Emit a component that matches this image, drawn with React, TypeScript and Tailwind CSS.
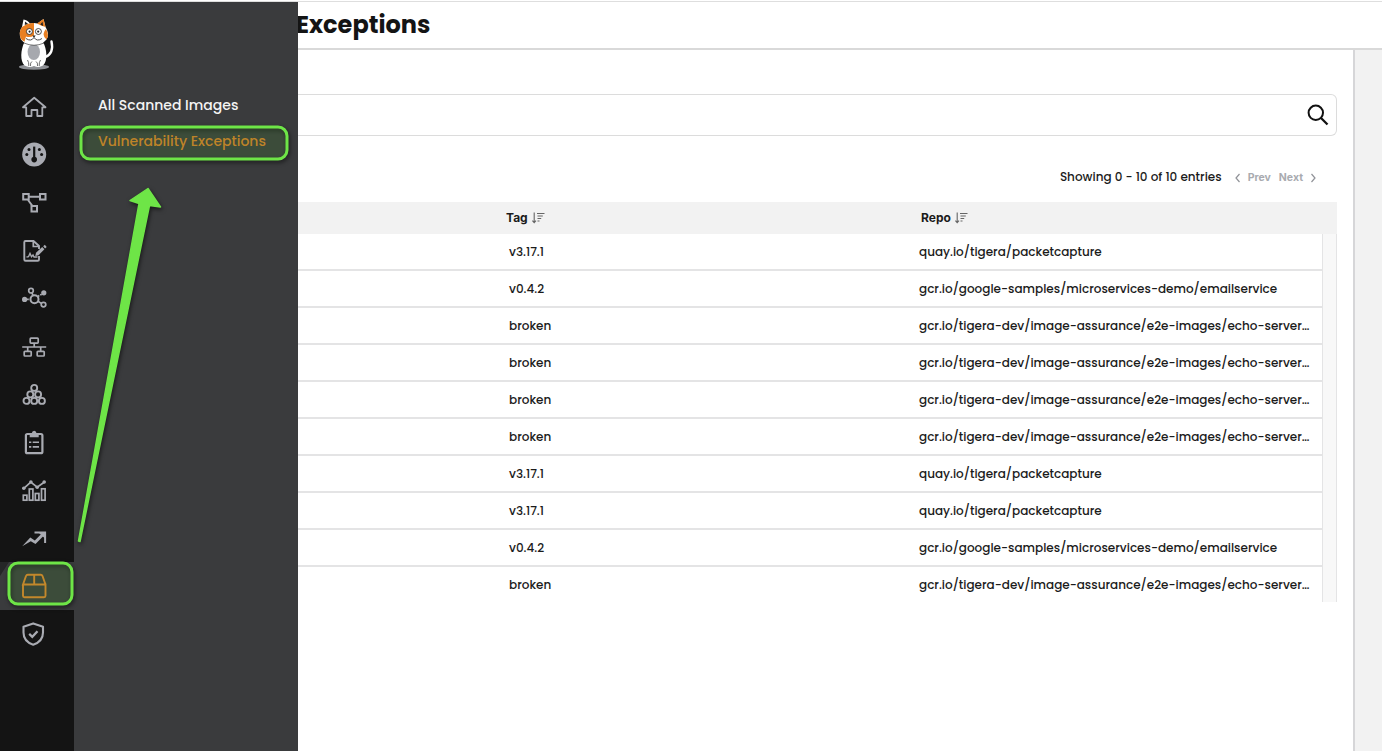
import type { ReactNode } from "react";

const iconProps = { width: 26, height: 26, viewBox: "0 0 26 26", fill: "none", stroke: "currentColor", strokeWidth: 1.7 } as const;

function CatLogo() {
  return (
    <svg width="38" height="54" viewBox="0 0 38 54">
      <ellipse cx="16" cy="50" rx="15" ry="2.7" fill="#8d8f94" />
      <path d="M27.5 40 C34 37 35 31 33.5 24.5" fill="none" stroke="#fff" strokeWidth="2.4" strokeLinecap="round" />
      <path d="M6.5 25C2.5 33 2 44 6.5 48.5Q11 51 16 49Q21 51 25 48.5C30 44 29 32 25 25Z" fill="#fff" />
      <ellipse cx="15.8" cy="35" rx="6.2" ry="8" fill="#a6a8ae" />
      <path d="M9.5 43Q11 45 10.8 49M12.5 49Q12 45.5 14 44.5M18 44.5Q20 45.5 19.5 49M22.5 43Q21 45 21.2 49" fill="none" stroke="#333" strokeWidth="0.7" />
      <path d="M4 10L5.5 2.5Q9.5 3 12 6.5Q16 5.5 19.5 6.5L25.5 2L27.5 10Q32 17 28.5 22.5Q24 28 16 28Q7 28 3 22.5Q0 16 4 10Z" fill="#fff" />
      <path d="M4 10L9 7Q14 6 16 6.1V18.5Q12 21 8 19.5L6.5 24.8Q3.5 23.5 2.3 20.5Q0.8 14 4 10Z" fill="#e87f22" />
      <path d="M19 6.5L25.5 2L27.5 10L23 8.5Z" fill="#e87f22" />
      <path d="M28 12Q31.5 18 28.5 22.5Q25.5 20 25.5 17Q26 14 28 12Z" fill="#e87f22" />
      <path d="M6.8 8L7 4.5L10 6.7ZM22.3 7.5L24.5 4.8L25.2 9Z" fill="#222" />
      <g fill="#fff" stroke="#222" strokeWidth="0.8">
        <circle cx="11.4" cy="14.5" r="3" />
        <circle cx="20.4" cy="14.5" r="3" />
      </g>
      <g fill="#222">
        <circle cx="11.6" cy="14.6" r="1.1" />
        <circle cx="20.2" cy="14.6" r="1.1" />
        <path d="M14.3 18.5H17.7L16 20.8Z" />
      </g>
      <path d="M16 20.5Q13 25 8 21.5M16 20.5Q19 25 24 21.5" fill="none" stroke="#222" strokeWidth="0.8" />
      <path d="M6 26Q16 30.5 26 26" fill="none" stroke="#444" strokeWidth="0.7" />
    </svg>
  );
}

const icons: { name: string; art: ReactNode }[] = [
  { name: "Home", art: <path d="M2 13.3L13.2 3.7L24.5 13.3H21.3V22H16.3V16H10.5V22H5.2V13.3Z" strokeWidth="1.8" strokeLinejoin="round" /> },
  {
    name: "Dashboard",
    art: (
      <>
        <circle cx="13.2" cy="12.6" r="12" fill="currentColor" stroke="none" />
        <path d="M13.2 4.6V16" stroke="#141414" strokeWidth="2.2" />
        <g fill="#141414" stroke="none">
          <circle cx="13.2" cy="17.6" r="2.8" />
          <circle cx="8" cy="7.6" r="1.5" />
          <circle cx="18.4" cy="7.6" r="1.5" />
          <circle cx="5.8" cy="12.5" r="1.5" />
          <circle cx="20.6" cy="12.5" r="1.5" />
        </g>
      </>
    ),
  },
  {
    name: "Service graph",
    art: (
      <>
        <rect x="2.2" y="4" width="5.5" height="5.5" strokeWidth="2" />
        <rect x="19" y="4" width="5.5" height="5.5" strokeWidth="2" />
        <rect x="10.5" y="16" width="5.5" height="5.5" strokeWidth="2" />
        <path d="M8 6.7H18.5M7 10L11.5 16" strokeWidth="2" />
      </>
    ),
  },
  {
    name: "Policies",
    art: (
      <>
        <path d="M18 18V21.5Q18 22.8 16.7 22.8H4.5Q3.3 22.8 3.3 21.5V4.2Q3.3 3 4.5 3H12.5L18 8V11" strokeWidth="1.9" />
        <path d="M12.3 3.3V8.5H18" />
        <path d="M5.5 19L7.5 18.7L9 15.5L10.5 18.7L12 17L13 19H16.5" strokeWidth="1.4" />
        <path d="M14.3 18L15 14.7L21.2 9L23.4 11.3L17.5 17.2Z" fill="currentColor" stroke="none" />
        <path d="M23 7.6L24.9 9.7" strokeWidth="2.2" />
      </>
    ),
  },
  {
    name: "Endpoints",
    art: (
      <>
        <circle cx="13.5" cy="13.2" r="4" strokeWidth="2" />
        <circle cx="10" cy="4.7" r="2.3" />
        <circle cx="22.5" cy="18.6" r="2.3" />
        <circle cx="3.6" cy="13.4" r="2.6" fill="currentColor" stroke="none" />
        <circle cx="22.8" cy="6.8" r="2.6" fill="currentColor" stroke="none" />
        <path d="M11 6.9L12 9.5M17 15.2L20.3 17.4" />
        <path d="M6 13.4H9.4M16.8 10.5L21 8" strokeDasharray="1.8 1" />
      </>
    ),
  },
  {
    name: "Network",
    art: (
      <>
        <rect x="9.2" y="4.1" width="8" height="5" rx="0.8" />
        <rect x="3.2" y="17.3" width="7" height="4.7" rx="0.8" />
        <rect x="16.2" y="17.3" width="7" height="4.7" rx="0.8" />
        <path d="M1.2 13H25.2M13.2 9V13M6.7 13V17M19.7 13V17" />
      </>
    ),
  },
  {
    name: "Clusters",
    art: (
      <g strokeWidth="1.9">
        <circle cx="13.2" cy="5.9" r="3" />
        <circle cx="9.3" cy="12.4" r="3" />
        <circle cx="17.1" cy="12.4" r="3" />
        <circle cx="5.5" cy="18.9" r="3" />
        <circle cx="13.2" cy="18.9" r="3" />
        <circle cx="20.9" cy="18.9" r="3" />
      </g>
    ),
  },
  {
    name: "Compliance",
    art: (
      <>
        <rect x="4.9" y="4" width="16.5" height="19.2" rx="1.5" strokeWidth="2.2" />
        <path d="M8.7 3.2H10.8Q11 0.7 13.2 0.7Q15.3 0.7 15.5 3.2H17.7V7.2H8.7Z" fill="currentColor" stroke="none" />
        <path d="M8 12.3H10.3M11.7 12.3H18M8 16.9H10.3M11.7 16.9H18" strokeWidth="1.6" />
      </>
    ),
  },
  {
    name: "Activity",
    art: (
      <>
        <path d="M2.5 10.6L9.8 4L16.2 9.2L23.5 4" />
        <g fill="currentColor" stroke="none">
          <circle cx="2.8" cy="10.2" r="1.8" />
          <circle cx="9.9" cy="4" r="1.8" />
          <circle cx="16.2" cy="9.2" r="1.8" />
          <circle cx="23.2" cy="4" r="1.8" />
        </g>
        <rect x="2.3" y="17.2" width="3.6" height="5" />
        <rect x="8.3" y="11" width="3.6" height="11.2" />
        <rect x="14.3" y="15.5" width="3.6" height="6.7" />
        <rect x="20.5" y="10.8" width="3.6" height="11.4" />
      </>
    ),
  },
  {
    name: "Trends",
    art: (
      <>
        <path d="M1.2 20.3L9.3 11.5L13.8 14.5L21 7.3L23.2 9.3L14.5 18L9.8 15.2Z" fill="currentColor" stroke="none" />
        <path d="M13.5 6.4H24.1V17" strokeWidth="2" />
        <path d="M18 7L24 7V12.5Z" fill="currentColor" stroke="none" />
      </>
    ),
  },
  {
    name: "Image assurance",
    art: <path d="M2 11.5V22.7Q2 24.2 3.5 24.2H23Q24.5 24.2 24.5 22.7V11.5H2L5 3Q5.5 1.8 6.7 1.8H19.8Q21 1.8 21.5 3L24.5 11.5M13.2 2V11.5" strokeWidth="1.9" />,
  },
  {
    name: "Threat defense",
    art: (
      <>
        <path d="M12.2 2.4L22 5.8V11.5Q22 20.5 12.2 23.7Q2.5 20.5 2.5 11.5V5.8Z" strokeWidth="2.1" strokeLinejoin="round" />
        <path d="M8.2 12.8L11.3 15.8L16.5 10.3" strokeWidth="2.3" />
      </>
    ),
  },
];

const itemClasses: Record<string, string> = {
  Trends: "flex h-[47px] shrink-0 items-center pl-[21px]",
  "Image assurance": "flex h-12 shrink-0 items-center bg-[#3a3b3d] pl-[21px] text-[#e0852a]",
};

function Sidebar() {
  return (
    <nav className="flex w-[74px] shrink-0 flex-col bg-[#141414] text-[#a9abb2]">
      <div className="h-[81px] shrink-0 pl-[18px] pt-[15px]">
        <CatLogo />
      </div>
      {icons.map(({ name, art }) => (
        <button key={name} aria-label={name} className={itemClasses[name] ?? "flex h-12 shrink-0 items-center pl-[21px]"}>
          <svg {...iconProps}>{art}</svg>
        </button>
      ))}
    </nav>
  );
}

function SortIcon() {
  return (
    <svg width="13" height="12" viewBox="0 0 13 12" fill="none" stroke="#666" strokeWidth="1.1">
      <path d="M2.2 0.5V10.5M0.4 8.7L2.2 10.7L4 8.7M5 1.5H12.5M5.5 4H10.8M5.5 6.5H9.2M5.5 9H7.5" />
    </svg>
  );
}

const capture = { tag: "v3.17.1", repo: "quay.io/tigera/packetcapture" };
const email = { tag: "v0.4.2", repo: "gcr.io/google-samples/microservices-demo/emailservice" };
const echo = { tag: "broken", repo: "gcr.io/tigera-dev/image-assurance/e2e-images/echo-server…" };
const rows = [capture, email, echo, echo, echo, echo, capture, capture, email, echo];

function Images() {
  return (
    <main className="flex min-w-0 flex-1 flex-col">
      <header className="flex h-12 shrink-0 items-center border-b-2 border-[#d9d9d9] text-2xl font-bold text-[#141414]">
        <h1 className="-ml-0.5">Exceptions</h1>
      </header>
      <div className="flex flex-1">
        <section className="w-[1057px] shrink-0 border-r-2 border-[#d6d6d8] pr-4 pt-11">
          <div className="flex h-[42px] items-center justify-end rounded-r-md border border-l-0 border-[#dcdcdc] pr-[7px]">
            <svg width="22" height="22" viewBox="0 0 22 22" fill="none" stroke="#111" strokeWidth="2">
              <circle cx="8.8" cy="8.8" r="7.2" />
              <path d="M14 14L20.5 20.5" strokeWidth="2.3" />
            </svg>
          </div>
          <div className="flex h-[66px] items-center justify-end pr-5 pt-[15px] text-xs font-medium text-[#1b1b1b]">
            <span className="mr-3">Showing 0 - 10 of 10 entries</span>
            <div className="flex items-center pt-0.5 font-['Inter',sans-serif] text-[10.5px] font-bold text-[#a9abb0]">
              <svg width="8" height="10" viewBox="0 0 8 10" fill="none" stroke="#909298" strokeWidth="1.2"><path d="M5.5 1L2 5L5.5 9" /></svg>
              <span className="ml-1.5">Prev</span>
              <span className="ml-2">Next</span>
              <svg className="ml-1.5" width="8" height="10" viewBox="0 0 8 10" fill="none" stroke="#909298" strokeWidth="1.2"><path d="M2.5 1L6 5L2.5 9" /></svg>
            </div>
          </div>
          <div className="flex h-8 items-center bg-[#f2f2f2] font-['Inter',sans-serif] text-xs font-bold text-[#1b1b1b]">
            <div className="flex w-[415px] items-center gap-1 pl-[208px]">Tag <SortIcon /></div>
            <div className="flex items-center gap-1 pl-[208px]">Repo <SortIcon /></div>
          </div>
          <div className="flex h-[368px] overflow-hidden">
            <div className="min-w-0 flex-1">
              {rows.map((row, i) => (
                <div key={i} className="flex h-[37px] items-center border-b-2 border-[#e4e4e5] text-xs font-medium text-[#1b1b1b]">
                  <span className="w-[411px] shrink-0 pl-[211px]">{row.tag}</span>
                  <span className="ml-[210px] whitespace-nowrap">{row.repo}</span>
                </div>
              ))}
            </div>
            <div className="w-[15px] shrink-0 border-x border-[#e4e4e5] bg-[#f8f8f8]" />
          </div>
        </section>
        <div className="flex-1 bg-[#f2f2f2]" />
      </div>
    </main>
  );
}

export default function App() {
  return (
    <div className="relative flex h-[751px] w-[1382px] flex-col overflow-hidden bg-white font-['Poppins','Inter',sans-serif]">
      <div className="h-0.5 shrink-0 border-b border-[#dedede]" />
      <div className="flex min-h-0 flex-1">
        <Sidebar />
        <aside className="relative z-10 flex w-56 shrink-0 flex-col bg-[#3a3b3d] pl-6 pt-[93px] text-sm font-medium">
          <a className="h-9 whitespace-nowrap text-[#f4f4f4]">All Scanned Images</a>
          <a className="whitespace-nowrap text-[#da8026]">Vulnerability Exceptions</a>
        </aside>
        <Images />
      </div>
      <svg className="pointer-events-none absolute left-0 top-0 z-20" width="300" height="751" viewBox="0 0 300 751">
        <path d="M0 562H9L0 576Z" fill="#252627" />
        <g className="drop-shadow-[1px_2px_2px_rgba(0,0,0,0.6)]" stroke="#6ee547" strokeLinejoin="round">
          <rect x="81" y="127" width="206" height="32" rx="9" fill="#6ee547" fillOpacity="0.12" strokeWidth="3" />
          <rect x="9" y="563" width="63" height="41" rx="9" fill="#6ee547" fillOpacity="0.12" strokeWidth="3" />
          <path d="M148 188.5L160.5 207L149.5 205.5L80 541.5L78.5 541L139 203.5L130 200.5Z" fill="#6ee547" strokeWidth="1.5" />
        </g>
      </svg>
    </div>
  );
}
